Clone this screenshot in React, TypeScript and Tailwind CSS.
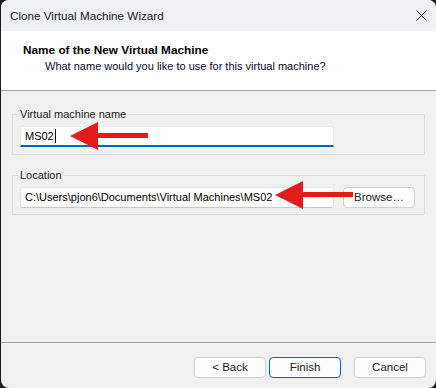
import React from "react"

const font = { fontFamily: '"Liberation Sans", Arial, sans-serif' }

function Arrow({ className }: { className: string }) {
  return (
    <svg className={className} viewBox="0 0 82 32" width="82" height="32">
      <polygon points="2,16 30,2 30,13 80,13 80,18 30,18 30,30" fill="#e31b1b" />
    </svg>
  )
}

function Btn({ label, primary }: { label: string; primary?: boolean }) {
  return (
    <button
      className={
        "w-[72px] h-[21px] rounded-[4px] bg-[#fdfdfd] text-[11.5px] text-[#1b1b1b] leading-none " +
        (primary ? "border border-[#0067c0]" : "border border-[#d0d0d0]")
      }
    >
      {label}
    </button>
  )
}

export default function App() {
  return (
    <div className="w-[436px] h-[388px] bg-[#1c1c1c] pl-px" style={font}>
      <div className="relative flex flex-col w-[435px] h-[388px] rounded-[8px] overflow-hidden bg-[#f0f0f0] text-[11px] text-black">
        <div className="flex items-center justify-between h-[31px] bg-[#eff0f5] pl-[9px] pr-[9px] shrink-0">
          <span className="text-[11.7px] text-[#1a1a1a]">Clone Virtual Machine Wizard</span>
          <svg width="11" height="11" viewBox="0 0 11 11">
            <path d="M0.5 0.5 L10.5 10.5 M10.5 0.5 L0.5 10.5" stroke="#1a1a1a" strokeWidth="1" />
          </svg>
        </div>
        <div className="h-[59px] bg-white pt-[11px] shrink-0">
          <div className="pl-[22px] font-bold text-[11.8px] leading-[16px]">Name of the New Virtual Machine</div>
          <div className="pl-[44px] leading-[16px] text-[#0a0a2a]">What name would you like to use for this virtual machine?</div>
        </div>
        <div className="h-px bg-[#a0a0a0] shrink-0" />

        <div className="pl-[11px] pr-[11px] pt-[15px] flex flex-col gap-[12px]">
          <fieldset className="border border-[#dcdcdc] pl-[7px] pb-[7px] pt-[4px]">
            <legend className="-ml-[2px] px-[2px] leading-[16px] text-[#1a1a1a]">Virtual machine name</legend>
            <div className="w-[314px] h-[21px] bg-white border-t border-x border-[#e8e8e8] border-b-2 border-b-[#0067c0] rounded-t-[3px] flex items-center pl-[4px]">
              <span className="border-r border-black leading-[14px] pr-px">MS02</span>
            </div>
          </fieldset>
          <fieldset className="border border-[#dcdcdc] pl-[7px] pb-[6px] pt-[4px]">
            <legend className="-ml-[2px] px-[2px] leading-[16px] text-[#1a1a1a]">Location</legend>
            <div className="flex items-start gap-[9px]">
              <div className="w-[314px] h-[21px] bg-white border border-[#e5e5e5] border-b-[#c8c8c8] rounded-[3px] flex items-center pl-[4px] whitespace-nowrap">
                C:\Users\pjon6\Documents\Virtual Machines\MS02
              </div>
              <Btn label="Browse…" />
            </div>
          </fieldset>
        </div>

        <div className="flex-1" />
        <div className="h-px bg-[#a0a0a0] shrink-0" />
        <div className="flex justify-end items-center pt-[14px] pb-[10px] pr-[10px] shrink-0">
          <div className="flex gap-[3px]">
            <Btn label="< Back" />
            <Btn label="Finish" primary />
          </div>
          <div className="ml-[13px]">
            <Btn label="Cancel" />
          </div>
        </div>

        <Arrow className="absolute left-[67px] top-[120px]" />
        <Arrow className="absolute left-[272px] top-[179px]" />
      </div>
    </div>
  )
}
